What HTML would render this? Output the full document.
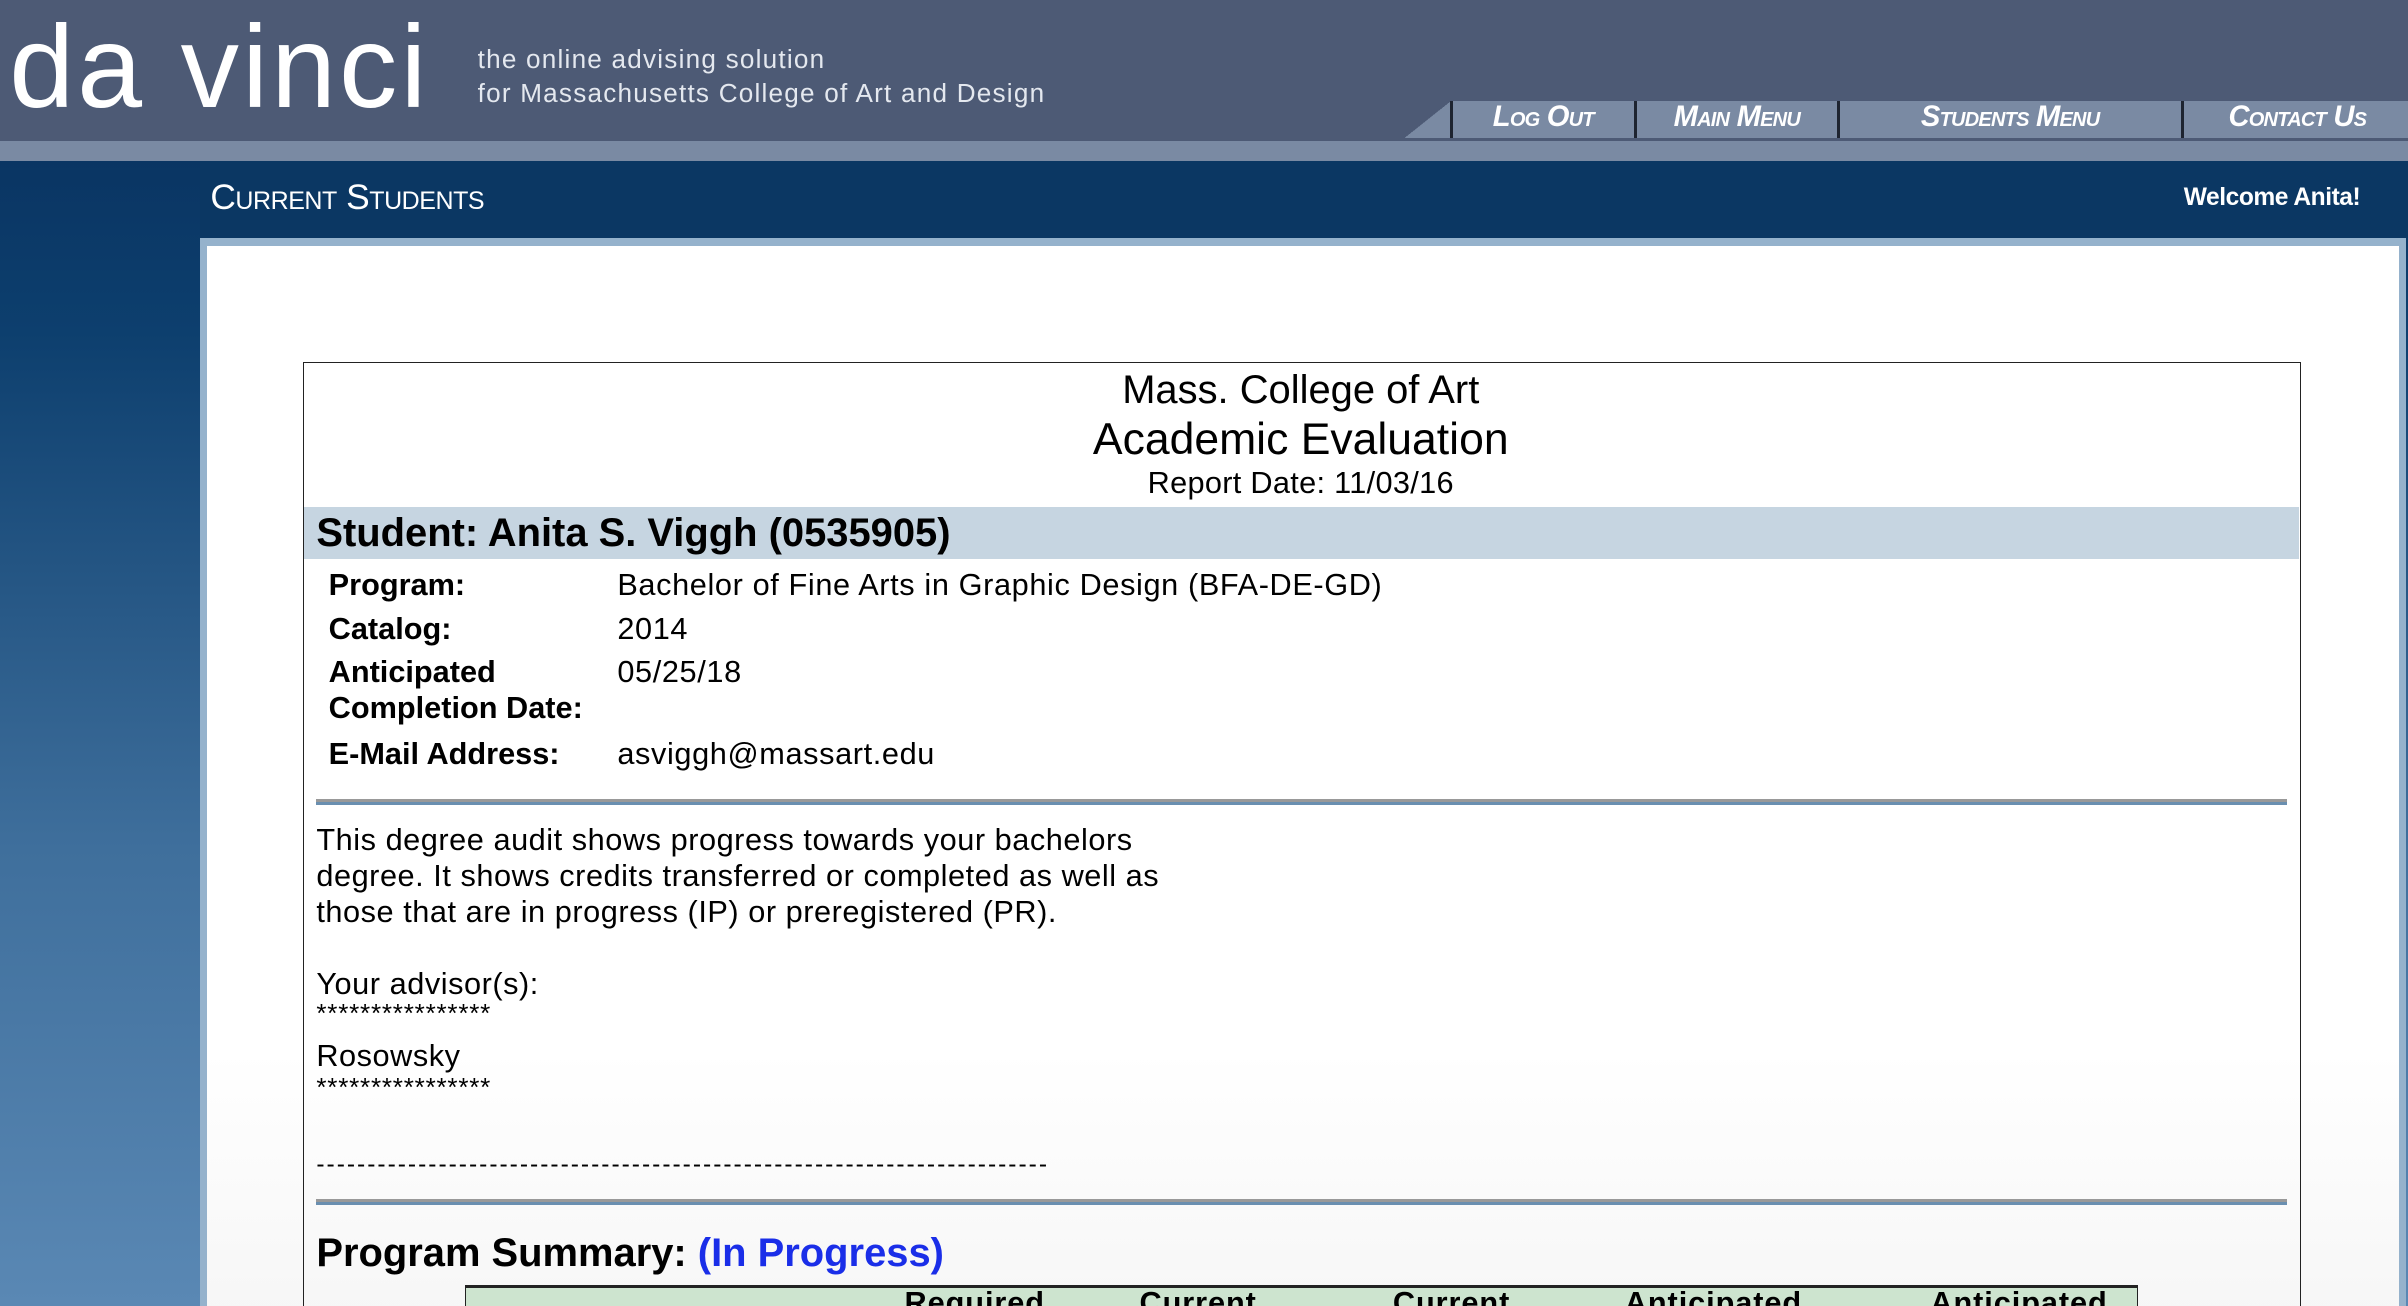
<!DOCTYPE html>
<html><head><meta charset="utf-8">
<style>
html,body{margin:0;padding:0;overflow:hidden;}
body{width:2408px;height:1306px;background:#fff;font-family:"Liberation Sans",Arial,sans-serif;}
#z{zoom:1.535714;width:1568px;height:851px;position:relative;overflow:hidden;}
.a{position:absolute;white-space:nowrap;}
.sc{font-variant:small-caps;}
.nav{position:absolute;top:66px;height:24px;background:#7a8aa3;border-left:2px solid #1e2430;color:#fff;font-weight:bold;font-style:italic;font-variant:small-caps;font-size:19px;line-height:22px;text-align:center;letter-spacing:-0.5px;}
.lbl{position:absolute;left:214px;font-weight:bold;font-size:20px;line-height:23px;}
.val{position:absolute;left:402px;font-size:20px;line-height:23px;letter-spacing:0.4px;}
.t{position:absolute;left:206px;font-size:20px;line-height:23.5px;letter-spacing:0.35px;}
.rule{position:absolute;left:206px;width:1283px;height:2px;background:#6a8fb0;border-top:2px solid #999;}
.h{position:absolute;top:837px;font-size:20px;font-weight:bold;line-height:24px;letter-spacing:0.6px;}
</style></head><body><div id="z">
<div class="a" style="left:0;top:0;width:1568px;height:92px;background:#4d5a75;"></div>
<div class="a" style="left:0;top:92px;width:1568px;height:13px;background:#7a8aa3;"></div>
<div class="a" style="left:6px;top:-1px;font-size:76px;line-height:90px;color:#fff;letter-spacing:2px;">da vinci</div>
<div class="a" style="left:311px;top:28px;font-size:17px;line-height:22px;color:#e4e8ef;letter-spacing:0.8px;">the online advising solution<br>for Massachusetts College of Art and Design</div>
<div class="a" style="left:913px;top:66px;width:32px;height:25px;background:linear-gradient(to bottom right,#4d5a75 50%,#7a8aa3 50%);"></div>
<div class="nav" style="left:944px;width:118px;">Log Out</div>
<div class="nav" style="left:1064px;width:130px;">Main Menu</div>
<div class="nav" style="left:1196px;width:222px;">Students Menu</div>
<div class="nav" style="left:1420px;width:148px;">Contact Us</div>
<div class="a" style="left:913px;top:90px;width:655px;height:2px;background:#4d5a75;"></div>
<div class="a" style="left:0;top:105px;width:1568px;height:746px;background:linear-gradient(to bottom,#0a3563 0%,#0d3f6e 15%,#3f6f9c 60%,#5a88b4 100%);"></div>
<div class="a" style="left:130px;top:105px;width:1438px;height:50px;background:#0b3763;"></div>
<div class="a sc" style="left:137px;top:115px;font-size:23px;line-height:27px;color:#fff;letter-spacing:-0.3px;">Current Students</div>
<div class="a" style="left:1422px;top:120px;font-size:16px;font-weight:bold;color:#fff;letter-spacing:-0.3px;">Welcome Anita!</div>
<div class="a" style="left:130px;top:155px;width:1437px;height:700px;background:#95b2cc;"></div>
<div class="a" style="left:135px;top:160px;width:1427px;height:700px;background:linear-gradient(to bottom,#fff 75%,#f6f6f6 100%);"></div>
<div class="a" style="left:197px;top:236px;width:1300px;height:620px;border:1px solid #222;"></div>
<div class="a" style="left:197px;top:240px;width:1300px;text-align:center;font-size:26px;line-height:28px;">Mass. College of Art</div>
<div class="a" style="left:197px;top:270px;width:1300px;text-align:center;font-size:29px;line-height:32px;">Academic Evaluation</div>
<div class="a" style="left:197px;top:303px;width:1300px;text-align:center;font-size:20px;line-height:24px;letter-spacing:0.2px;">Report Date: 11/03/16</div>
<div class="a" style="left:198px;top:330px;width:1299px;height:34px;background:#c6d5e1;"></div>
<div class="a" style="left:206px;top:332px;font-size:26px;font-weight:bold;line-height:30px;">Student: Anita S. Viggh (0535905)</div>
<div class="lbl" style="top:369px;">Program:</div><div class="val" style="top:369px;">Bachelor of Fine Arts in Graphic Design (BFA-DE-GD)</div>
<div class="lbl" style="top:398px;">Catalog:</div><div class="val" style="top:398px;">2014</div>
<div class="lbl" style="top:426px;">Anticipated<br>Completion Date:</div><div class="val" style="top:426px;">05/25/18</div>
<div class="lbl" style="top:479px;">E-Mail Address:</div><div class="val" style="top:479px;">asviggh@massart.edu</div>
<div class="rule" style="top:520px;"></div>
<div class="t" style="top:535px;">This degree audit shows progress towards your bachelors<br>degree. It shows credits transferred or completed as well as<br>those that are in progress (IP) or preregistered (PR).</div>
<div class="t" style="top:629px;">Your advisor(s):</div>
<div class="t" style="top:652px;font-size:17px;line-height:16px;letter-spacing:0.5px;">****************</div>
<div class="t" style="top:676px;">Rosowsky</div>
<div class="t" style="top:700px;font-size:17px;line-height:16px;letter-spacing:0.5px;">****************</div>
<div class="t" style="top:747px;font-size:16px;letter-spacing:1.3px;">------------------------------------------------------------------------</div>
<div class="rule" style="top:781px;"></div>
<div class="a" style="left:206px;top:801px;font-size:26px;font-weight:bold;line-height:30px;">Program Summary: <span style="color:#1a2ee8;">(In Progress)</span></div>
<div class="a" style="left:303px;top:837px;width:1088px;height:30px;border:1px solid #222;border-top-width:2px;background:#cde4cf;"></div>
<div class="h" style="left:589px;">Required</div>
<div class="h" style="left:742px;">Current</div>
<div class="h" style="left:907px;">Current</div>
<div class="h" style="left:1058px;">Anticipated</div>
<div class="h" style="left:1257px;">Anticipated</div>
</div></body></html>
